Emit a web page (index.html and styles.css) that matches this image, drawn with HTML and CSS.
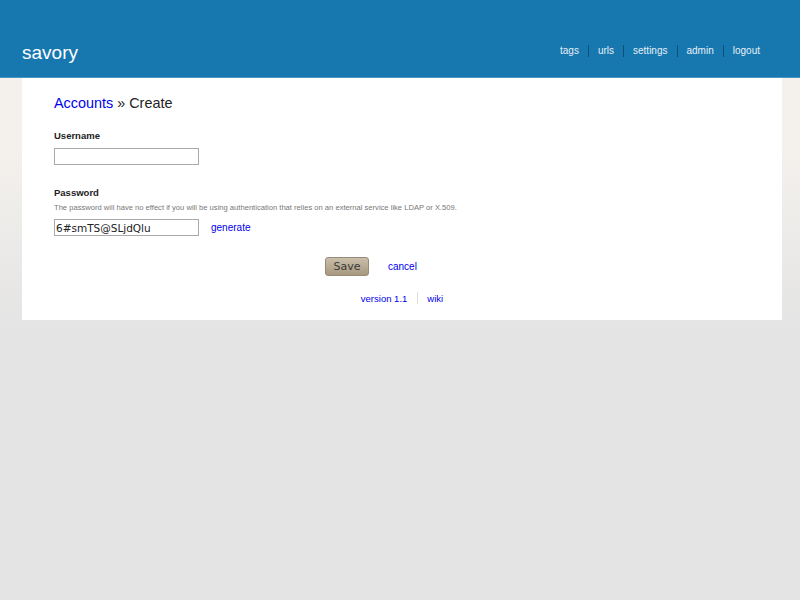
FILE: index.html
```html
<!DOCTYPE html>
<html>
<head>
<meta charset="utf-8">
<title>savory</title>
<link rel="stylesheet" href="styles.css">
</head>
<body>
<div class="header">
  <div class="logo">savory</div>
  <ul class="nav">
    <li><a href="#">tags</a></li>
    <li><a href="#">urls</a></li>
    <li><a href="#">settings</a></li>
    <li><a href="#">admin</a></li>
    <li><a href="#">logout</a></li>
  </ul>
</div>
<div class="page">
  <div class="content">
    <h1 class="crumb"><a href="#">Accounts</a> » Create</h1>
    <form class="form">
      <div class="field">
        <label class="label">Username</label>
        <input class="text" type="text">
      </div>
      <div class="field">
        <label class="label">Password</label>
        <div class="help">The password will have no effect if you will be using authentication that relies on an external service like LDAP or X.509.</div>
        <div class="row">
          <input class="text" type="text" value="6#smTS@SLjdQlu">
          <a class="gen" href="#">generate</a>
        </div>
      </div>
      <div class="actions">
        <button class="save" type="button">Save</button>
        <a class="cancel" href="#">cancel</a>
      </div>
    </form>
    <div class="footer">
      <a href="#">version 1.1</a><span class="sep"></span><a href="#">wiki</a>
    </div>
  </div>
</div>
</body>
</html>
```
FILE: styles.css
```css
html, body {
  margin: 0;
  padding: 0;
}
body {
  font-family: "Liberation Sans", Arial, sans-serif;
  background: linear-gradient(to bottom, #f4f1ed 0px, #f4f1ed 150px, #e4e4e4 330px, #e4e4e4 100%) no-repeat;
  background-color: #e4e4e4;
  min-height: 600px;
}
.header {
  background: #1778b0;
  height: 77px;
  border-bottom: 1px solid #4b95c4;
  display: flex;
  align-items: flex-end;
  justify-content: space-between;
  box-sizing: content-box;
}
.logo {
  color: #ffffff;
  font-size: 19px;
  padding: 0 0 13px 22px;
  line-height: 22px;
}
.nav {
  list-style: none;
  margin: 0;
  padding: 0 31px 20px 0;
  display: flex;
}
.nav li {
  font-size: 10px;
  line-height: 12px;
  padding: 0 9px;
  border-left: 1px solid #0d4f78;
}
.nav li:first-child {
  border-left: none;
}
.nav a {
  color: #e6eff6;
  text-decoration: none;
}
.page {
  padding: 0 18px 0 22px;
}
.content {
  background: #ffffff;
  padding: 14px 32px 10px 32px;
  min-height: 218px;
}
.crumb {
  font-size: 14.4px;
  font-weight: normal;
  color: #222;
  margin: 0 0 15px 0;
  line-height: 22px;
}
.crumb a {
  color: #0000ee;
  text-decoration: none;
}
.field {
  margin-bottom: 21px;
}
.label {
  display: block;
  font-size: 9.5px;
  font-weight: bold;
  color: #222;
  line-height: 14px;
  margin-bottom: 5px;
}
.field + .field .label {
  margin-bottom: 2px;
}
.help {
  font-size: 7.6px;
  color: #777;
  line-height: 12px;
  margin-bottom: 5px;
}
.text {
  width: 145px;
  height: 17px;
  box-sizing: border-box;
  border: 1px solid #aaa;
  padding: 0 1px;
  margin: 0;
  font-family: "DejaVu Sans", sans-serif;
  font-size: 10.5px;
  color: #222;
  display: block;
}
.row {
  display: flex;
  align-items: center;
  gap: 12px;
}
.gen, .cancel {
  font-size: 10px;
  color: #0000ee;
  text-decoration: none;
}
.actions {
  display: flex;
  align-items: center;
  gap: 19px;
  padding-left: 271px;
  margin-top: 2px;
}
.save {
  width: 44px;
  height: 19px;
  box-sizing: border-box;
  border: 1px solid #978a76;
  border-radius: 3px;
  background: linear-gradient(to bottom, #cabfab, #a8987f);
  font-family: "DejaVu Sans", sans-serif;
  font-size: 11px;
  color: #3a3a3a;
  padding: 0;
}
.footer {
  display: flex;
  justify-content: center;
  align-items: center;
  margin-top: 16px;
  font-size: 9.5px;
}
.footer a {
  color: #0000ee;
  text-decoration: none;
}
.sep {
  display: inline-block;
  width: 1px;
  height: 12px;
  background: #ddd;
  margin: 0 9px 0 10px;
}
```
